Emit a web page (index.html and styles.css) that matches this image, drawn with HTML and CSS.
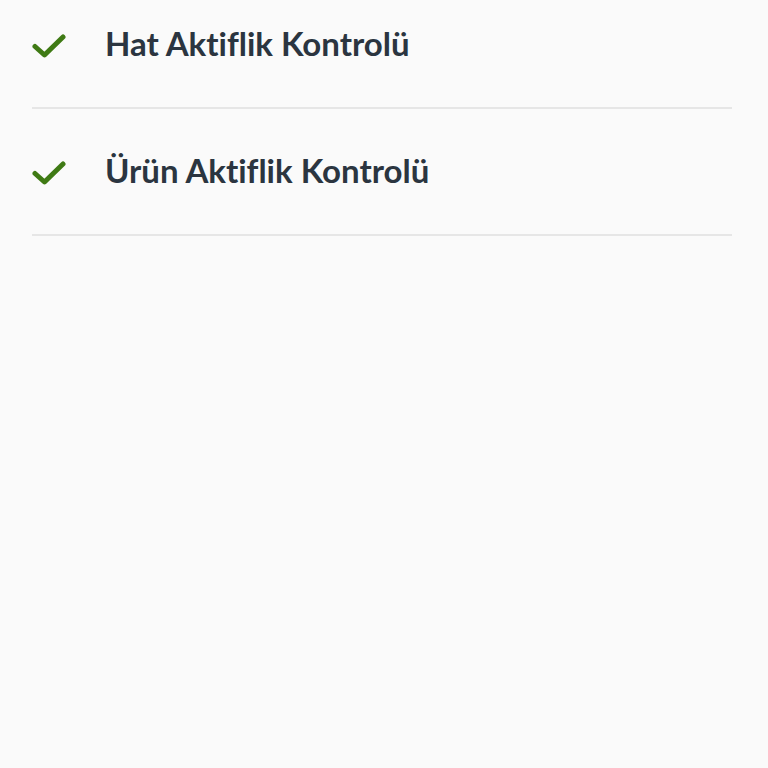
FILE: index.html
```html
<!DOCTYPE html>
<html>
    <head>
        <link rel="stylesheet" href="styles.css">
    </head>
    <body>
        <div class="list">
            <div class="row">
                <svg class="check" viewBox="0 0 34 24" width="34" height="24">
                    <path d="M3 12.5 L12.5 21 L31 3" />
                </svg>
                <span class="label">Hat Aktiflik Kontrolü</span>
            </div>
            <div class="row">
                <svg class="check" viewBox="0 0 34 24" width="34" height="24">
                    <path d="M3 12.5 L12.5 21 L31 3" />
                </svg>
                <span class="label">Ürün Aktiflik Kontrolü</span>
            </div>
        </div>
    </body>
</html>
```

FILE: styles.css
```css
html, body {
    margin: 0;
    height: 100%;
    background-color: #fafafa;
}

.list {
    display: flex;
    flex-flow: column;
    margin: -18px 36px 0 32px;
}

.row {
    display: flex;
    flex-flow: row nowrap;
    align-items: center;
    height: 125px;
    border-bottom: 2px solid #e6e6e6;
}

.check {
    flex: 0 0 auto;
    margin-top: 2px;
}

.check path {
    fill: none;
    stroke: #3f7a14;
    stroke-width: 5;
    stroke-linecap: round;
    stroke-linejoin: round;
}

.label {
    margin: 0 0 4px 39px;
    font-family: Lato, "Noto Sans", sans-serif;
    font-weight: bold;
    font-size: 33px;
    font-variant-ligatures: none;
    color: #2b3540;
}
```
